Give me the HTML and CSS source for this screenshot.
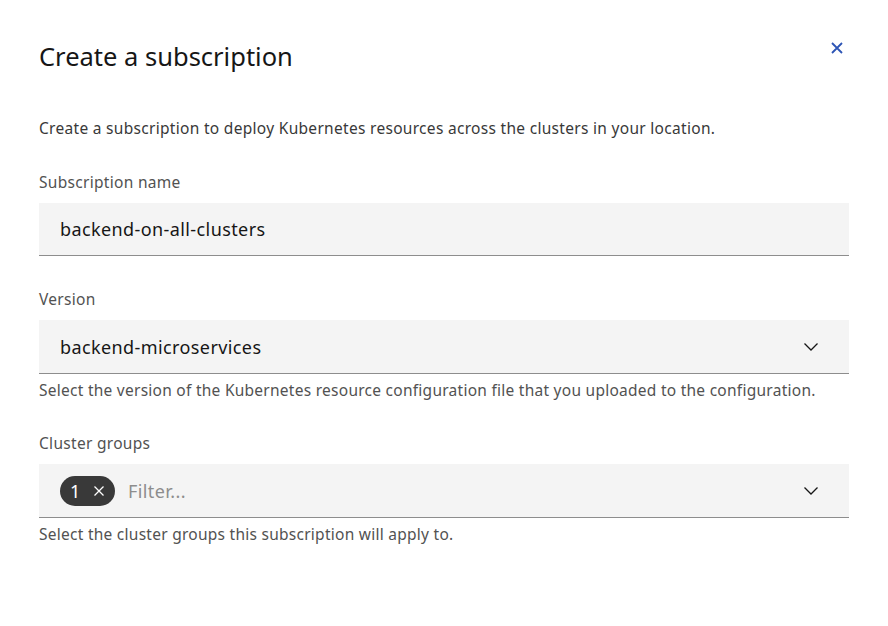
FILE: index.html
```html
<!DOCTYPE html>
<html>
<head>
<meta charset="utf-8">
<link rel="stylesheet" href="styles.css">
</head>
<body>
<div class="modal">
  <div class="header">
    <h2 class="title">Create a subscription</h2>
    <button class="close" aria-label="Close">
      <svg width="14" height="14" viewBox="0 0 14 14"><path d="M2 2 L12 12 M12 2 L2 12" stroke="#2d55b5" stroke-width="1.8" fill="none"/></svg>
    </button>
  </div>
  <p class="desc">Create a subscription to deploy Kubernetes resources across the clusters in your location.</p>

  <div class="field first">
    <label class="label">Subscription name</label>
    <div class="input"><span class="value">backend-on-all-clusters</span></div>
  </div>

  <div class="field">
    <label class="label">Version</label>
    <div class="input select"><span class="value">backend-microservices</span>
      <svg class="chev" width="16" height="16" viewBox="0 0 16 16"><path d="M1.5 4.5 L8 11 L14.5 4.5" stroke="#161616" stroke-width="1.3" fill="none"/></svg>
    </div>
    <div class="helper">Select the version of the Kubernetes resource configuration file that you uploaded to the configuration.</div>
  </div>

  <div class="field">
    <label class="label">Cluster groups</label>
    <div class="input select multi">
      <span class="tag"><span class="tag-num">1</span><svg width="12" height="12" viewBox="0 0 12 12"><path d="M1.5 1.5 L10.5 10.5 M10.5 1.5 L1.5 10.5" stroke="#ffffff" stroke-width="1.3" fill="none"/></svg></span>
      <span class="placeholder">Filter...</span>
      <svg class="chev" width="16" height="16" viewBox="0 0 16 16"><path d="M1.5 4.5 L8 11 L14.5 4.5" stroke="#161616" stroke-width="1.3" fill="none"/></svg>
    </div>
    <div class="helper">Select the cluster groups this subscription will apply to.</div>
  </div>
</div>
</body>
</html>
```
FILE: styles.css
```css
* { box-sizing: border-box; }
html, body { margin: 0; padding: 0; background: #ffffff; }
body {
  font-family: "Noto Sans", "Open Sans", sans-serif;
  color: #161616;
}
.modal {
  padding: 38px 39px 0 39px;
  width: 888px;
}
.header {
  display: flex;
  justify-content: space-between;
  align-items: flex-start;
}
.title {
  margin: 0;
  font-weight: 400;
  font-size: 25.5px;
  line-height: 36px;
  letter-spacing: 0;
  color: #161616;
}
.close {
  border: 0;
  background: none;
  padding: 0;
  margin: 3px 5px 0 0;
  width: 14px;
  height: 14px;
  display: flex;
  cursor: pointer;
}
.desc {
  margin: 44px 0 0 0;
  font-size: 15.5px;
  line-height: 20px;
  letter-spacing: 0.3px;
  color: #393939;
}
.field { margin-top: 33px; }
.field.first { margin-top: 34px; }
.label {
  display: block;
  font-size: 15.5px;
  line-height: 20px;
  letter-spacing: 0.3px;
  color: #525252;
  margin-bottom: 11px;
}
.input {
  height: 53px;
  background: #f4f4f4;
  border-bottom: 1px solid #8d8d8d;
  display: flex;
  align-items: center;
  padding: 0 21px;
  font-size: 18px;
  letter-spacing: 0.4px;
  color: #161616;
}
.input.select { height: 54px; }
.select .value { flex: 1; }
.chev { margin-left: auto; margin-right: 9px; }
.helper {
  font-size: 15.5px;
  line-height: 20px;
  letter-spacing: 0.26px;
  color: #525252;
  margin-top: 6px;
}
.tag {
  display: inline-flex;
  align-items: center;
  height: 30px;
  width: 55px;
  padding: 0 0 0 10px;
  border-radius: 15px;
  background: #393939;
  color: #ffffff;
  font-size: 18px;
}
.tag-num { width: 23px; }
.placeholder {
  margin-left: 13px;
  color: #8d8d8d;
  flex: 1;
}
```
